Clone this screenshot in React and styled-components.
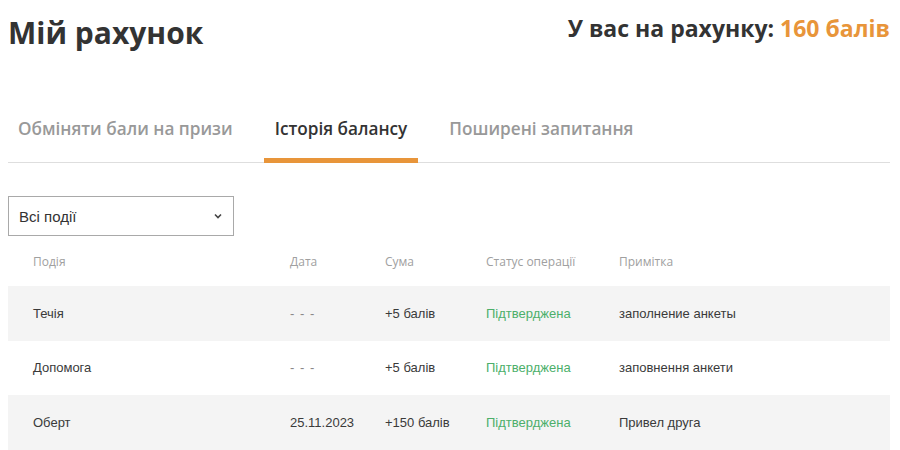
import React from "react";
import styled, { createGlobalStyle } from "styled-components";

const Global = createGlobalStyle`
  body {
    margin: 0;
    background: #fff;
    font-family: "Open Sans", sans-serif;
    color: #333;
  }
`;

const Page = styled.div`
  width: 882px;
  padding: 0 10px 0 8px;
`;

const Header = styled.div`
  display: flex;
  justify-content: space-between;
  align-items: flex-start;
  padding-top: 13px;
`;

const Title = styled.h1`
  margin: 0;
  font-size: 30px;
  font-weight: 700;
  line-height: 40px;
  color: #333;
`;

const Balance = styled.div`
  font-size: 23px;
  font-weight: 700;
  line-height: 30px;
  color: #333;
`;

const Points = styled.span`
  color: #e8953a;
`;

const Tabs = styled.div`
  display: flex;
  gap: 20px;
  margin-top: 64px;
  border-bottom: 1px solid #dedede;
`;

const Tab = styled.div`
  padding: 0 11px 17px;
  margin-left: ${(p) => (p.$first ? "-1px" : "0")};
  font-size: 17.2px;
  font-weight: 600;
  line-height: 24px;
  color: ${(p) => (p.$active ? "#333" : "#999")};
  border-bottom: 5px solid ${(p) => (p.$active ? "#e8953a" : "transparent")};
  margin-bottom: -1px;
`;

const Select = styled.div`
  margin-top: 33px;
  height: 38px;
  border: 1px solid #a9a9a9;
  display: flex;
  align-items: center;
  justify-content: space-between;
  padding: 0 10px;
  box-sizing: content-box;
  width: 204px;
  font-family: "Liberation Sans", Arial, sans-serif;
  font-size: 15px;
  color: #333;
`;

const Row = styled.div`
  display: grid;
  grid-template-columns: 257px 95px 101px 133px 1fr;
  align-items: center;
  padding-left: 25px;
  height: ${(p) => (p.$head ? "50px" : "54.5px")};
  background: ${(p) => (p.$shade ? "#f4f4f4" : "#fff")};
  font-family: ${(p) => (p.$head ? '"Open Sans", sans-serif' : '"Liberation Sans", Arial, sans-serif')};
  font-size: ${(p) => (p.$head ? "12px" : "13px")};
  color: ${(p) => (p.$head ? "#a0a0a0" : "#3a3a3a")};
`;

const Status = styled.span`
  color: #4caf6a;
`;

const Dash = styled.span`
  color: #888;
  letter-spacing: 1px;
`;

const rows = [
  { event: "Течія", date: null, sum: "+5 балів", note: "заполнение анкеты" },
  { event: "Допомога", date: null, sum: "+5 балів", note: "заповнення анкети" },
  { event: "Оберт", date: "25.11.2023", sum: "+150 балів", note: "Привел друга" },
];

function Chevron() {
  return (
    <svg width="10" height="10" viewBox="0 0 10 10">
      <path d="M2 3.5 L5 6.5 L8 3.5" fill="none" stroke="#444" strokeWidth="1.6" />
    </svg>
  );
}

export default function App() {
  return (
    <Page>
      <Global />
      <Header>
        <Title>Мій рахунок</Title>
        <Balance>
          У вас на рахунку: <Points>160 балів</Points>
        </Balance>
      </Header>
      <Tabs>
        <Tab $first>Обміняти бали на призи</Tab>
        <Tab $active>Історія балансу</Tab>
        <Tab>Поширені запитання</Tab>
      </Tabs>
      <Select>
        <span>Всі події</span>
        <Chevron />
      </Select>
      <Row $head>
        <span>Подія</span>
        <span>Дата</span>
        <span>Сума</span>
        <span>Статус операції</span>
        <span>Примітка</span>
      </Row>
      {rows.map((r, i) => (
        <Row key={i} $shade={i % 2 === 0}>
          <span>{r.event}</span>
          <span>{r.date ? r.date : <Dash>- - -</Dash>}</span>
          <span>{r.sum}</span>
          <Status>Підтверджена</Status>
          <span>{r.note}</span>
        </Row>
      ))}
    </Page>
  );
}
